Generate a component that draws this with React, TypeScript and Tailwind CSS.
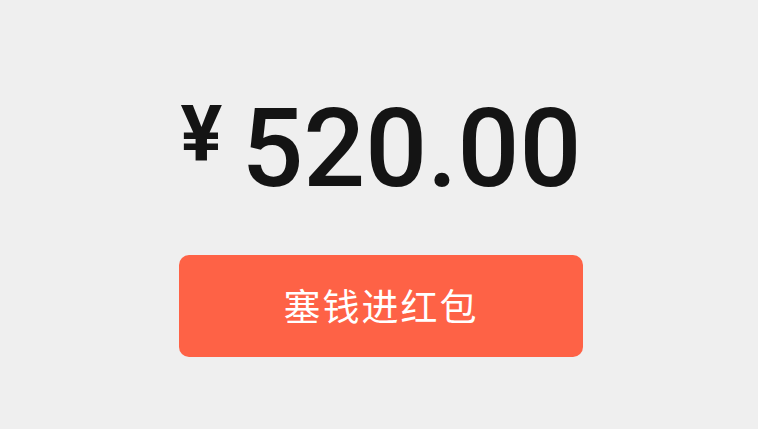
import React from 'react';

export default function App() {
  return (
    <div className="w-[758px] h-[429px] bg-[#efefef] flex flex-col items-center pt-[95px]">
      <div className="flex items-start text-[#141414] ml-[4px]" style={{ fontFamily: 'Roboto, "Liberation Sans", sans-serif' }}>
        <span className="text-[78px] font-bold leading-none mt-[1px] mr-[19px]">¥</span>
        <span className="text-[109px] font-medium leading-none">520.00</span>
      </div>
      <button
        className="mt-[51px] ml-[4px] w-[404px] h-[102px] rounded-[10px] bg-[#fe6246] text-white text-[37px] tracking-[2px] flex items-center justify-center"
        style={{ fontFamily: '"Noto Sans CJK SC", "Noto Sans", sans-serif' }}
      >
        塞钱进红包
      </button>
    </div>
  );
}
